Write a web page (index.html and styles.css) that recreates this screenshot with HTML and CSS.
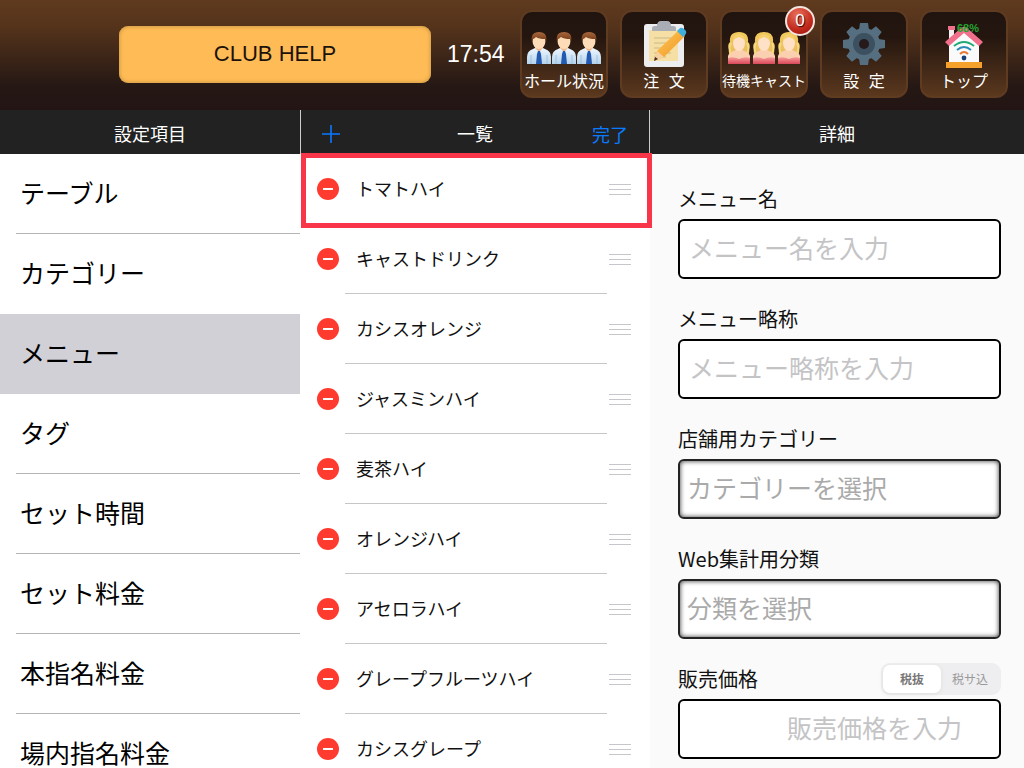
FILE: index.html
```html
<!DOCTYPE html>
<html lang="ja">
<head>
  <meta charset="utf-8">
  <meta name="viewport" content="width=device-width, initial-scale=1">
  <title>CLUB HELP</title>
  <link rel="stylesheet" href="styles.css">
</head>
<body>
  <svg class="defs" aria-hidden="true">
    <defs>
      <linearGradient id="hair" x1="0" y1="0" x2="0" y2="1">
        <stop offset="0" stop-color="#a8663c"/>
        <stop offset="1" stop-color="#6b3413"/>
      </linearGradient>
      <linearGradient id="shirt" x1="0" y1="0" x2="0" y2="1">
        <stop offset="0" stop-color="#f2f9ff"/>
        <stop offset="1" stop-color="#b4d3ec"/>
      </linearGradient>
      <linearGradient id="blond" x1="0" y1="0" x2="0" y2="1">
        <stop offset="0" stop-color="#f2c95c"/>
        <stop offset="1" stop-color="#e9bd62"/>
      </linearGradient>
      <linearGradient id="dress" x1="0" y1="0" x2="0" y2="1">
        <stop offset="0" stop-color="#f79a98"/>
        <stop offset="1" stop-color="#d9485a"/>
      </linearGradient>
      <linearGradient id="pencil" x1="0" y1="0" x2="1" y2="1">
        <stop offset="0" stop-color="#ffc95a"/>
        <stop offset="1" stop-color="#ee9420"/>
      </linearGradient>
    </defs>
    <symbol id="man" viewBox="0 0 24 34">
      <path d="M0 33v-7q0-6 6-8l4-2h4l4 2q6 2 6 8v7z" fill="url(#shirt)"/>
      <path d="M8 15h8v2l-4 4-4-4z" fill="#eeb68c"/>
      <path d="M11 20h2l1 3 1 10h-6l1-10z" fill="#2459b0"/>
      <path d="M4 24v9M20 24v9" stroke="#9fc0de" stroke-width="1"/>
      <ellipse cx="12" cy="10" rx="6.5" ry="8" fill="#ffdcb8"/>
      <path d="M5 11Q3 1 12 1t7 10l-1-3q-6 0-9-2-2 2-3 2z" fill="url(#hair)"/>
    </symbol>
    <symbol id="woman" viewBox="0 0 24 34">
      <path d="M12 1Q2 1 3 11q-3 3-1 7-1 6 3 7h14q4-1 3-7 2-4-1-7Q22 1 12 1z" fill="url(#blond)"/>
      <path d="M1 33v-8q1-4 6-5l3-2h4l3 2q5 1 6 5v8z" fill="#fbd0b0"/>
      <path d="M1 27q5-2 11 1 6-3 11-1v6H1z" fill="url(#dress)"/>
      <path d="M4 12q-3 5 0 11M20 12q3 5 0 11" fill="none" stroke="#f7da80" stroke-width="2"/>
      <ellipse cx="12" cy="12" rx="6" ry="8" fill="#ffe1c8"/>
      <path d="M6 10q0-6 6-7 6 1 6 7-2-3-6-4-4 1-6 4z" fill="#f5d06c"/>
    </symbol>
    <symbol id="minus" viewBox="0 0 22 22">
      <circle cx="11" cy="11" r="11" fill="#ff3b30"/>
      <path d="M6 11h10" stroke="#fff" stroke-width="2"/>
    </symbol>
    <symbol id="grip" viewBox="0 0 22 12">
      <path d="M0 1.5h22M0 6.5h22M0 11.5h22" stroke="#c7c7cb" stroke-width="1"/>
    </symbol>
  </svg>

  <header class="topbar">
    <button class="club">CLUB HELP</button>
    <time class="clock">17:54</time>
    <nav class="tiles">
      <button class="tile">
        <span class="tile-icon people">
          <svg><use href="#man"/></svg>
          <svg><use href="#man"/></svg>
          <svg><use href="#man"/></svg>
        </span>
        <span>ホール状況</span>
      </button>
      <button class="tile">
        <svg class="tile-icon" viewBox="0 0 46 50">
          <rect x="3" y="5" width="40" height="43" rx="3" fill="#ededf0"/>
          <path d="M8 11h29v31H8z" fill="#f6dfa4"/>
          <path d="M13 19h19M13 24h15M13 29h13M13 34h17M13 38h12" stroke="#c9b98a" stroke-width="1"/>
          <path d="M11 12V9q0-2 3-2h2q0-5 4-5h6q4 0 4 5h2q3 0 3 2v3z" fill="#a9adb5"/>
          <path d="M13 42l3-10 22-21 6 6-21 21z" fill="url(#pencil)"/>
          <path d="M13 42l3-10 7 6z" fill="#f5d0a0"/>
          <path d="M13 42l1-4 3 2z" fill="#3a2a22"/>
          <path d="M36 12l3-3q2-1 4 1l2 2q1 2-1 4l-2 2z" fill="#3fb0dc"/>
        </svg>
        <span class="spread">注 文</span>
      </button>
      <button class="tile">
        <span class="tile-icon people">
          <svg><use href="#woman"/></svg>
          <svg><use href="#woman"/></svg>
          <svg><use href="#woman"/></svg>
        </span>
        <span class="small">待機キャスト</span>
        <span class="badge">0</span>
      </button>
      <button class="tile">
        <svg class="tile-icon" viewBox="0 0 46 50">
          <g fill="#566f80" transform="translate(23 25)">
            <circle r="16"/>
            <path id="tooth" d="M-5-14l1-7h8l1 7v28l-1 7h-8l-1-7z"/>
            <use href="#tooth" transform="rotate(45)"/>
            <use href="#tooth" transform="rotate(90)"/>
            <use href="#tooth" transform="rotate(135)"/>
            <circle r="11" fill="#3d5060"/>
            <circle r="5" fill="#25191a"/>
          </g>
        </svg>
        <span class="spread">設 定</span>
      </button>
      <button class="tile">
        <svg class="tile-icon" viewBox="0 0 46 50">
          <path d="M8 9h5v14H8z" fill="#f3eef0"/>
          <path d="M7 7h7v4H7z" fill="#f0708c"/>
          <path d="M8 22L23 9l15 13v22H8z" fill="#fafafa"/>
          <path d="M4 23L20 9q3-2 6 0l16 14-4 4-15-13L8 27z" fill="#f0708c"/>
          <path d="M5 43h36v6H5z" fill="#f5a12c"/>
          <g fill="none" stroke-width="2">
            <path d="M13 27q10-8 20 0" stroke="#20a878"/>
            <path d="M16 31q7-6 14 0" stroke="#2a8ab5"/>
            <path d="M19 35q4-4 8 0" stroke="#e57a35"/>
          </g>
          <circle cx="23" cy="39" r="2.4" fill="#173f78"/>
        </svg>
        <span>トップ</span>
        <span class="battery">68%</span>
      </button>
    </nav>
  </header>

  <main class="panels">
    <section class="panel">
      <header class="panel-head"><h2>設定項目</h2></header>
      <nav class="menu">
        <a href="#">テーブル</a>
        <a href="#">カテゴリー</a>
        <a href="#" class="active">メニュー</a>
        <a href="#">タグ</a>
        <a href="#">セット時間</a>
        <a href="#">セット料金</a>
        <a href="#">本指名料金</a>
        <a href="#">場内指名料金</a>
      </nav>
    </section>

    <section class="panel list-panel">
      <header class="panel-head">
        <button class="head-btn" aria-label="追加">
          <svg width="18" height="18" viewBox="0 0 18 18"><path d="M9 0v18M0 9h18" stroke="#0a7aff" stroke-width="1.6"/></svg>
        </button>
        <h2>一覧</h2>
        <button class="head-btn">完了</button>
      </header>
      <ul class="items">
        <li class="marked">
          <button class="remove" aria-label="削除"><svg><use href="#minus"/></svg></button>
          <span class="name">トマトハイ</span>
          <svg class="grip"><use href="#grip"/></svg>
        </li>
        <li>
          <button class="remove" aria-label="削除"><svg><use href="#minus"/></svg></button>
          <span class="name">キャストドリンク</span>
          <svg class="grip"><use href="#grip"/></svg>
        </li>
        <li>
          <button class="remove" aria-label="削除"><svg><use href="#minus"/></svg></button>
          <span class="name">カシスオレンジ</span>
          <svg class="grip"><use href="#grip"/></svg>
        </li>
        <li>
          <button class="remove" aria-label="削除"><svg><use href="#minus"/></svg></button>
          <span class="name">ジャスミンハイ</span>
          <svg class="grip"><use href="#grip"/></svg>
        </li>
        <li>
          <button class="remove" aria-label="削除"><svg><use href="#minus"/></svg></button>
          <span class="name">麦茶ハイ</span>
          <svg class="grip"><use href="#grip"/></svg>
        </li>
        <li>
          <button class="remove" aria-label="削除"><svg><use href="#minus"/></svg></button>
          <span class="name">オレンジハイ</span>
          <svg class="grip"><use href="#grip"/></svg>
        </li>
        <li>
          <button class="remove" aria-label="削除"><svg><use href="#minus"/></svg></button>
          <span class="name">アセロラハイ</span>
          <svg class="grip"><use href="#grip"/></svg>
        </li>
        <li>
          <button class="remove" aria-label="削除"><svg><use href="#minus"/></svg></button>
          <span class="name">グレープフルーツハイ</span>
          <svg class="grip"><use href="#grip"/></svg>
        </li>
        <li>
          <button class="remove" aria-label="削除"><svg><use href="#minus"/></svg></button>
          <span class="name">カシスグレープ</span>
          <svg class="grip"><use href="#grip"/></svg>
        </li>
      </ul>
    </section>

    <section class="panel detail-panel">
      <header class="panel-head"><h2>詳細</h2></header>
      <form class="detail">
        <div class="field">
          <label for="menuName">メニュー名</label>
          <input id="menuName" type="text" placeholder="メニュー名を入力">
        </div>
        <div class="field">
          <label for="shortName">メニュー略称</label>
          <input id="shortName" type="text" placeholder="メニュー略称を入力">
        </div>
        <div class="field">
          <label for="category">店舗用カテゴリー</label>
          <select id="category"><option>カテゴリーを選択</option></select>
        </div>
        <div class="field">
          <label for="webGroup">Web集計用分類</label>
          <select id="webGroup"><option>分類を選択</option></select>
        </div>
        <div class="field">
          <div class="field-head">
            <label for="price">販売価格</label>
            <div class="segment">
              <input type="radio" name="tax" id="taxOut" checked>
              <label for="taxOut">税抜</label>
              <input type="radio" name="tax" id="taxIn">
              <label for="taxIn">税サ込</label>
            </div>
          </div>
          <input id="price" class="price" type="text" placeholder="販売価格を入力">
        </div>
      </form>
    </section>
  </main>
</body>
</html>
```

FILE: styles.css
```css
* {
  box-sizing: border-box;
}
body {
  margin: 0;
  height: 100vh;
  display: flex;
  flex-direction: column;
  overflow: hidden;
  background: #fff;
  color: #111;
  font-family: "Noto Sans CJK JP", sans-serif;
}
button, input, select {
  font-family: inherit;
  margin: 0;
}
button {
  border: 0;
  padding: 0;
  background: none;
  cursor: pointer;
}
.defs {
  position: absolute;
  width: 0;
  height: 0;
}

/* top bar */
.topbar {
  flex: none;
  display: flex;
  justify-content: flex-end;
  align-items: center;
  gap: 16px;
  height: 110px;
  padding: 0 16px 2px;
  background: linear-gradient(#5f3a1e, #54331b 25%, #241714 80%, #221513);
}
.club {
  width: 312px;
  height: 57px;
  border-radius: 9px;
  background: #ffbb55;
  box-shadow: inset 0 0 4px #b58c40;
  color: #1c120c;
  font: 22px "Liberation Sans", sans-serif;
}
.clock {
  width: 57px;
  color: #fff;
  font: 23px "Liberation Sans", sans-serif;
}
.tiles {
  display: flex;
  gap: 12px;
}
.tile {
  position: relative;
  display: flex;
  flex-direction: column;
  align-items: center;
  width: 88px;
  height: 88px;
  padding-top: 7px;
  border: 2px solid #5f3b21;
  border-radius: 12px;
  background: linear-gradient(#21140f, #24160f 30%, #5b381e);
  color: #fff;
  font-size: 16px;
  line-height: 22px;
  white-space: nowrap;
}
.tile-icon {
  flex: none;
  width: 46px;
  height: 50px;
}
.people {
  display: flex;
  justify-content: center;
  align-items: flex-end;
  gap: 1px;
  width: 76px;
  padding-bottom: 4px;
}
.people svg {
  width: 24px;
  height: 34px;
}
.spread {
  word-spacing: 6px;
}
.small {
  font-size: 14px;
}
.badge {
  position: absolute;
  top: -6px;
  right: -9px;
  width: 30px;
  height: 30px;
  border: 2px solid #f3e4df;
  border-radius: 50%;
  background: radial-gradient(circle at 40% 25%, #e8705c, #c22a1c 60%, #941208);
  font: 17px/26px "Liberation Sans", sans-serif;
  text-shadow: 1px 1px 1px #300;
}
.battery {
  position: absolute;
  top: 10px;
  right: 27px;
  color: #25a332;
  font: bold 11px/12px "Liberation Sans", sans-serif;
}

/* columns */
.panels {
  flex: 1;
  min-height: 0;
  display: grid;
  grid-template-columns: 300fr 350fr 374fr;
}
.panel {
  min-width: 0;
  min-height: 0;
}
.panel-head {
  display: flex;
  align-items: center;
  justify-content: center;
  height: 44px;
  background: #222;
  color: #fff;
}
.panel-head h2 {
  margin: 0;
  padding-top: 2px;
  font-size: 18px;
  font-weight: 400;
}
.list-panel .panel-head {
  justify-content: space-between;
  padding: 0 21px;
  border-right: 1px solid #ccc;
  border-left: 1px solid #ccc;
}
.head-btn {
  display: flex;
  align-items: center;
  width: 36px;
  padding-top: 3px;
  color: #0a7aff;
  font-size: 18px;
}

/* left menu */
.menu {
  display: flex;
  flex-direction: column;
}
.menu a {
  display: flex;
  align-items: center;
  height: 80px;
  padding: 0 0 4px 20px;
  background: linear-gradient(#b4b4b6, #b4b4b6) 16px 100% / 100% 1px no-repeat;
  color: #000;
  font-size: 25px;
  line-height: 28px;
  text-decoration: none;
}
.menu a:has(+ .active) {
  background: none;
}
.menu .active {
  background: #d1d0d6;
}

/* item list */
.items {
  margin: 0;
  padding: 0;
  list-style: none;
}
.items li {
  position: relative;
  display: flex;
  align-items: center;
  height: 70px;
  padding: 0 19px 0 17px;
  background: linear-gradient(#c6c6c8, #c6c6c8) 45px 100% / calc(100% - 88px) 1px no-repeat;
}
.items .marked {
  background: none;
}
.marked::after {
  content: "";
  position: absolute;
  inset: -1px -2px -4px 1px;
  border: 5px solid #f93549;
  z-index: 1;
}
.remove, .remove svg {
  display: block;
  width: 22px;
  height: 22px;
}
.name {
  flex: 1;
  padding: 0 0 2px 17px;
  font-size: 18px;
}
.grip {
  width: 22px;
  height: 12px;
}

/* detail form */
.detail-panel {
  background: #fafafa;
}
.detail {
  display: flex;
  flex-direction: column;
  gap: 25px;
  padding: 30px 23px 0 28px;
}
.field {
  display: flex;
  flex-direction: column;
  gap: 5px;
  font-size: 20px;
  line-height: 30px;
}
.field > label {
  height: 30px;
}
.field > input, select {
  width: 100%;
  height: 60px;
  padding: 0 9px 4px;
  border: 2px solid #000;
  border-radius: 6px;
  background: #fff;
  font-size: 25px;
}
.field > input::placeholder {
  color: #c4c4c6;
}
select {
  appearance: none;
  padding: 0 7px 4px;
  border-color: #222;
  box-shadow: inset 0 0 5px #333;
  color: #aaa;
}
.field .price {
  padding-right: 37px;
  text-align: right;
}
.field-head {
  display: flex;
  align-items: center;
  justify-content: space-between;
  height: 30px;
}
.segment {
  display: flex;
  width: 120px;
  height: 32px;
  padding: 2px;
  border-radius: 9px;
  background: #eeeef0;
}
.segment input {
  position: absolute;
  opacity: 0;
}
.segment label {
  flex: 1;
  border-radius: 7px;
  color: #999;
  font-size: 12px;
  line-height: 28px;
  text-align: center;
}
.segment input:checked + label {
  background: #fff;
  box-shadow: 0 1px 4px #ddd;
  color: #777;
  font-weight: 700;
}
```
